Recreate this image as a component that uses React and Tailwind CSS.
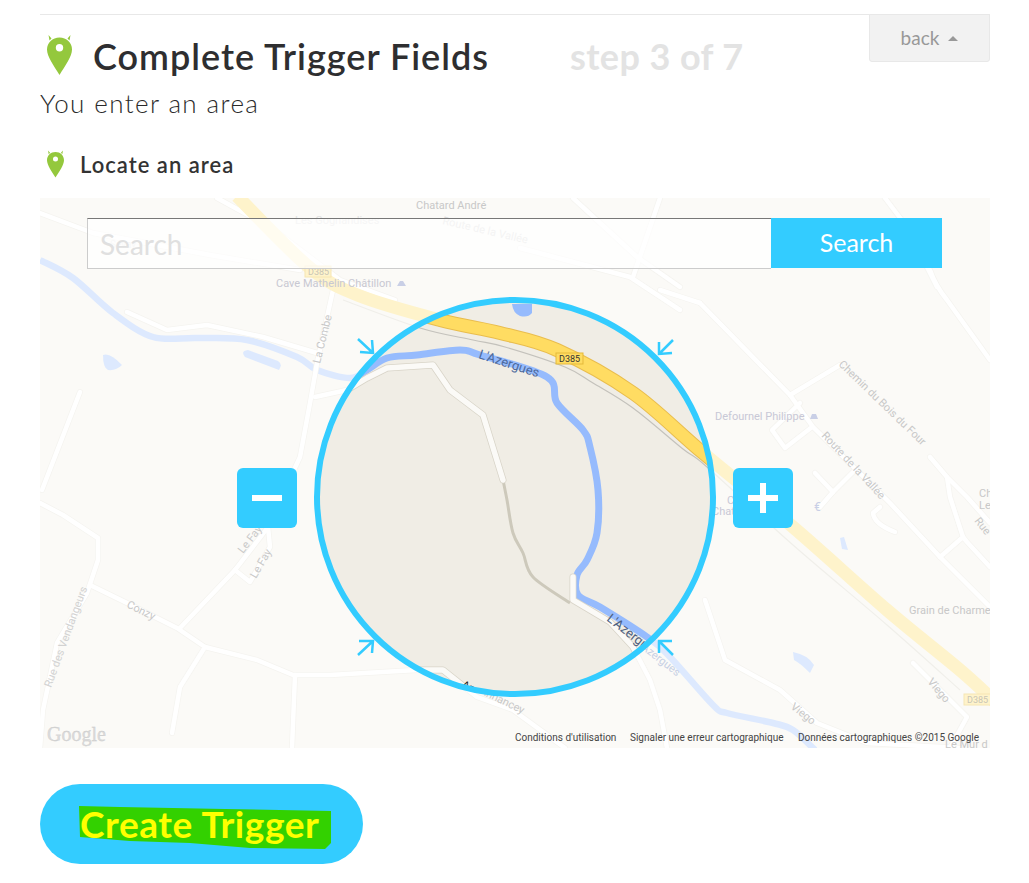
const BLUE = "#33ccff";

// catmull-rom through the points, so river and highway don't look like polylines
function smooth(pts) {
  let d = `M${pts[0][0]} ${pts[0][1]}`;
  for (let i = 0; i < pts.length - 1; i++) {
    const p0 = pts[i - 1] || pts[i];
    const p1 = pts[i];
    const p2 = pts[i + 1];
    const p3 = pts[i + 2] || p2;
    const c1x = p1[0] + (p2[0] - p0[0]) / 6;
    const c1y = p1[1] + (p2[1] - p0[1]) / 6;
    const c2x = p2[0] - (p3[0] - p1[0]) / 6;
    const c2y = p2[1] - (p3[1] - p1[1]) / 6;
    d += ` C${c1x} ${c1y} ${c2x} ${c2y} ${p2[0]} ${p2[1]}`;
  }
  return d;
}

const roads = [
  "M333 290 L317 363 L310 403 L300 457 L280 500 L268 527 L270 547 L250 582 L235 570",
  "M268 527 L262 535 L235 570 L180 628",
  "M315 397 L347 390 L367 378 L387 368 L433 365 L450 390 L483 415 L503 480",
  "M40 503 L63 515 L98 538 L98 560 L87 593 L57 643 L43 710 L40 748",
  "M90 585 L127 603 L177 628 L205 647 L257 660 L293 675 L330 675 L417 670 L443 670 L477 697 L513 710 L565 748",
  "M205 647 L180 687 L172 733",
  "M295 675 L292 748",
  "M80 392 L42 490",
  "M127 312 L167 330 L207 325 L263 337 L317 353",
  "M40 213 L93 233 L210 255 L300 270",
  "M217 198 L270 227 L340 280 L395 300",
  "M700 303 L790 395 L813 427 L890 503 L940 557 L990 607",
  "M660 290 L700 303",
  "M790 395 L840 365",
  "M930 457 L947 477 L967 497 L990 523",
  "M947 477 L950 497 L963 537 L940 557",
  "M963 537 L967 542 L990 567",
  "M930 270 Q935 285 947 300 L990 360",
  "M800 403 L772 430 L785 448 L812 427",
  "M815 473 L833 492 L853 472",
  "M833 492 L820 507",
  "M880 507 L873 513 Q874 524 895 532",
  "M705 600 L725 660 L780 690 L817 723 L867 743 L960 748",
  "M913 663 L967 717 L950 748",
  "M573 198 L637 257 L680 287",
  "M660 198 L633 277",
  "M520 248 L630 277 L680 310",
  "M885 198 L907 227 L937 287",
  "M573 577 L573 600 L610 622 L633 647 L650 680 L660 710 L667 748",
];

const river = smooth([
  [40, 260], [73, 278], [113, 313], [153, 337], [197, 338], [247, 340], [297, 357], [317, 370], [350, 378],
  [367, 370], [387, 358], [417, 355], [460, 350], [480, 355], [547, 377], [557, 403], [583, 430], [590, 447],
  [598, 490], [597, 533], [587, 560], [577, 575], [578, 595], [600, 607], [647, 637], [670, 657], [713, 705],
  [727, 713], [773, 723], [793, 730], [815, 750],
]);
const highway = smooth([
  [237, 196], [310, 268], [360, 296], [440, 320], [500, 333], [557, 350], [633, 393], [703, 453], [793, 527],
  [887, 610], [960, 670], [995, 702],
]);
const railway = smooth([
  [343, 300], [420, 328], [473, 340], [505, 347], [565, 367], [593, 383], [633, 408], [683, 449], [707, 467],
  [793, 545], [887, 625], [960, 690],
]);
const footpath = smooth([[503, 480], [507, 500], [513, 533], [523, 553], [533, 577], [570, 603]]);

function Ponds({ fill }) {
  return (
    <g fill={fill}>
      <path d="M103 355 Q110 352 122 365 Q116 371 108 370 Q103 368 103 355Z" />
      <path d="M248 350 L278 361 Q283 364 279 370 L245 357 Q240 351 248 350Z" />
      <path d="M512 304 L532 304 L532 313 Q528 318 520 316 Q513 313 512 304Z" />
      <path d="M840 538 L844 537 L848 550 L842 549Z" />
      <path d="M793 652 Q808 655 814 665 L810 673 Q800 663 794 660Z" />
    </g>
  );
}

function Label({ x, y, r = 0, size = 11, fill = "#c8c8c8", children }) {
  return (
    <text x={x} y={y} fontSize={size} fill={fill} transform={r ? `rotate(${r} ${x} ${y})` : undefined}>
      {children}
    </text>
  );
}

function RoadSign({ x, y, w, bright }) {
  return (
    <g>
      <rect x={x} y={y} width={w} height="11" fill={bright ? "#ffdc62" : "#fef3cb"} stroke={bright ? "#e5b93a" : "#f6e6b4"} />
      <text x={x + 3} y={y + 9} fontSize="9" fill={bright ? "#333" : "#c9c5b5"}>D385</text>
    </g>
  );
}

function MapDrawing() {
  return (
    <svg viewBox="40 198 950 550" className="block w-full h-full" style={{ fontFamily: "Roboto, sans-serif" }}>
      <defs>
        <clipPath id="lens">
          <ellipse cx="515" cy="497" rx="197" ry="196" />
        </clipPath>
      </defs>

      <rect x="40" y="198" width="950" height="550" fill="#fbfaf7" />

      {/* faded map outside the circle */}
      <path d={river} fill="none" stroke="#dde9fe" strokeWidth="6.5" strokeLinejoin="round" />
      <Ponds fill="#dde9fe" />
      <g fill="none" strokeLinecap="round" strokeLinejoin="round">
        {roads.map((d) => (
          <path key={d} d={d} stroke="#f5f4f0" strokeWidth="6" />
        ))}
        {roads.map((d) => (
          <path key={d} d={d} stroke="#ffffff" strokeWidth="4.5" />
        ))}
      </g>
      <path d={railway} fill="none" stroke="#f0efea" strokeWidth="1.2" />
      <path d={highway} fill="none" stroke="#fef3cb" strokeWidth="13" strokeLinejoin="round" />

      <Label x={416} y={209}>Chatard André</Label>
      <Label x={295} y={224} fill="#e0e0e0">Les Gognandises</Label>
      <Label x={442} y={224} r={13} fill="#d8d8d8">Route de la Vallée</Label>
      <Label x={110} y={248} size={10} fill="#e6e6e6">Sevay</Label>
      <Label x={276} y={287} fill="#c8c8d2">Cave Mathelin Châtillon</Label>
      <path d="M397 286 L400 281 L403 281 L406 286Z" fill="#c9cfe6" />
      <RoadSign x={305} y={266} w={26} />
      <Label x={320} y={364} r={-76}>La Combe</Label>
      <Label x={838} y={365} r={44}>Chemin du Bois du Four</Label>
      <Label x={821} y={436} r={47}>Route de la Vallée</Label>
      <Label x={715} y={420} fill="#c8c8d6">Defournel Philippe</Label>
      <path d="M810 419 L812 414 L816 414 L818 419Z" fill="#c9cfe6" />
      <Label x={909} y={614}>Grain de Charme</Label>
      <Label x={243} y={554} r={-52}>Le Fay</Label>
      <Label x={256} y={579} r={-60}>Le Fay</Label>
      <Label x={126} y={607} r={26}>Conzy</Label>
      <Label x={51} y={688} r={-70} fill="#d2d2d2">Rue des Vendangeurs</Label>
      <Label x={790} y={708} r={38}>Viego</Label>
      <Label x={927} y={682} r={50}>Viego</Label>
      <Label x={945} y={748}>Le Mur d</Label>
      <Label x={979} y={497}>Ch</Label>
      <Label x={979} y={509}>Le</Label>
      <Label x={974} y={521} r={52}>Rue</Label>
      <Label x={727} y={504} fill="#c8c8d6">Champagne</Label>
      <Label x={712} y={515} fill="#c8c8d6">Chatillon-Vignes</Label>
      <text x="814" y="511" fontSize="12" fill="#c9cfe6">€</text>
      <rect x="964" y="694" width="30" height="11" fill="#fef3cb" stroke="#f6e6b4" />
      <text x="967" y="703" fontSize="9" fill="#c9c5b5">D385</text>
      <Label x={635} y={644} r={38} fill="#c6cfe4">L'Azergues</Label>
      <Label x={479} y={693} r={26}>Annancey</Label>

      {/* the part seen through the circle */}
      <g clipPath="url(#lens)">
        <rect x="300" y="290" width="430" height="420" fill="#f0ede5" />
        <path d={river} fill="none" stroke="#96bbfd" strokeWidth="7" strokeLinejoin="round" />
        <Ponds fill="#96bbfd" />
        <path d={footpath} fill="none" stroke="#cdc9bb" strokeWidth="3" />
        <g fill="none" strokeLinecap="round" strokeLinejoin="round">
          {roads.map((d) => (
            <path key={d} d={d} stroke="#d8d4c8" strokeWidth="7" />
          ))}
          {roads.map((d) => (
            <path key={d} d={d} stroke="#fbfaf7" strokeWidth="5.5" />
          ))}
        </g>
        <path d={railway} fill="none" stroke="#c4c2bc" strokeWidth="1.2" />
        <path d={highway} fill="none" stroke="#e9bd4e" strokeWidth="14" strokeLinejoin="round" />
        <path d={highway} fill="none" stroke="#ffdc62" strokeWidth="12" strokeLinejoin="round" />
        <Label x={478} y={358} r={18} size={13} fill="#4d6a9c">L'Azergues</Label>
        <Label x={606} y={620} r={38} size={13} fill="#4d5f80">L'Azergues</Label>
        <Label x={461} y={687} r={26} fill="#222">Annancey</Label>
        <RoadSign x={556} y={353} w={27} bright />
      </g>

      <ellipse cx="515" cy="497" rx="198" ry="197" fill="none" stroke={BLUE} strokeWidth="6" />

      <g fill="none" stroke={BLUE} strokeWidth="2.5">
        <path d="M358 339 L373 353 M372 340 L373 353 L360 352" />
        <path d="M673 340 L659 354 M659 342 L659 354 L672 353" />
        <path d="M358 655 L373 641 M359 641 L373 641 L372 653" />
        <path d="M673 655 L659 641 M672 641 L659 641 L659 653" />
      </g>

      <text x="47" y="741" fontSize="20" fill="#dcdcdc" stroke="#c8c8c8" strokeWidth="0.3" style={{ fontFamily: '"Liberation Serif", serif' }}>Google</text>
      <g fontSize="10" fill="#444">
        <text x="515" y="741">Conditions d'utilisation</text>
        <text x="630" y="741">Signaler une erreur cartographique</text>
        <text x="798" y="741">Données cartographiques ©2015 Google</text>
      </g>
    </svg>
  );
}

function Pin({ className }) {
  return (
    <svg viewBox="0 0 25 40" className={className}>
      <path
        fill="#94c83d"
        fillRule="evenodd"
        d="M12.5 2.5C5.5 2.5 0 7.5 0 14.5 0 21.5 7 31 12.5 40 18 31 25 21.5 25 14.5 25 7.5 19.5 2.5 12.5 2.5ZM12.5 9a3.7 3.7 0 1 1 0 7.4 3.7 3.7 0 0 1 0-7.4Z"
      />
      <path fill="#94c83d" d="M1.5 0 L4.5 3.5 L2.5 5.5Z M23.5 0 L20.5 3.5 L22.5 5.5Z" />
    </svg>
  );
}

export default function App() {
  return (
    <div className="w-[1029px] h-[883px] bg-white pl-[40px] pr-[39px] pt-[14px] font-['Lato',sans-serif] overflow-hidden">
      <div className="border-t border-[#e8e8e8]">
        <div className="flex items-start h-[48px]">
          <Pin className="w-[25px] h-[40px] ml-[7px] mt-[20px]" />
          <h1 className="ml-[21px] mt-[19px] text-[36px] leading-[44px] tracking-[1px] font-semibold text-[#2e2e30]">Complete Trigger Fields</h1>
          <span className="ml-[81px] mt-[19px] text-[36px] leading-[44px] tracking-[0.4px] font-bold text-[#e3e3e3]">step 3 of 7</span>
          <button className="ml-auto w-[121px] h-[48px] -mt-px flex items-center justify-center gap-[9px] bg-[#f2f2f2] border border-[#e8e8e8] rounded-b-[3px] text-[19px] text-[#999]">
            back
            <span className="border-x-[5px] border-x-transparent border-b-[5px] border-b-[#999]" />
          </button>
        </div>
        <p className="mt-[25px] text-[26px] leading-[30px] tracking-[1.4px] font-light text-[#2a2a2a]">You enter an area</p>
        <div className="flex items-center mt-[31px] h-[30px]">
          <Pin className="w-[17px] h-[28px] ml-[7px]" />
          <h2 className="ml-[16px] text-[22px] tracking-[1px] font-semibold text-[#333]">Locate an area</h2>
        </div>
        <div className="relative w-[950px] h-[550px] mt-[19px]">
          <MapDrawing />
          <div className="absolute left-[47px] top-[20px] w-[855px] h-[51px] flex">
            <div className="flex-1 h-full flex items-center pl-[12px] bg-white/70 border border-r-0 border-[#ccc] border-t-[#777] text-[28px] text-[#e0e0e0]">
              Search
            </div>
            <button className="w-[171px] h-[50px] bg-[#33ccff] text-white text-[25px]">Search</button>
          </div>
          <button className="absolute left-[197px] top-[270px] w-[60px] h-[60px] rounded-[6px] bg-[#33ccff] flex items-center justify-center">
            <span className="block w-[30px] h-[6px] bg-white" />
          </button>
          <button className="absolute left-[693px] top-[270px] w-[60px] h-[60px] rounded-[6px] bg-[#33ccff] flex items-center justify-center">
            <svg viewBox="0 0 30 30" className="w-[30px] h-[30px]">
              <path fill="#fff" d="M12 0h6v12h12v6H18v12h-6V18H0v-6h12z" />
            </svg>
          </button>
        </div>
        <button className="relative mt-[36px] w-[323px] h-[80px] rounded-full bg-[#33ccff] flex items-center pl-[40px]">
          <svg viewBox="0 0 260 50" className="absolute left-[36px] top-[20px] w-[260px] h-[50px]">
            <path fill="#33d100" d="M3 2 L44 3 L149 5 L255 7 L255 39 L249 45 L174 44 L114 39 L54 37 L4 33Z" />
          </svg>
          <span className="relative text-[37px] leading-[44px] tracking-[0.6px] font-bold text-[#ffff00]">Create Trigger</span>
        </button>
      </div>
    </div>
  );
}
